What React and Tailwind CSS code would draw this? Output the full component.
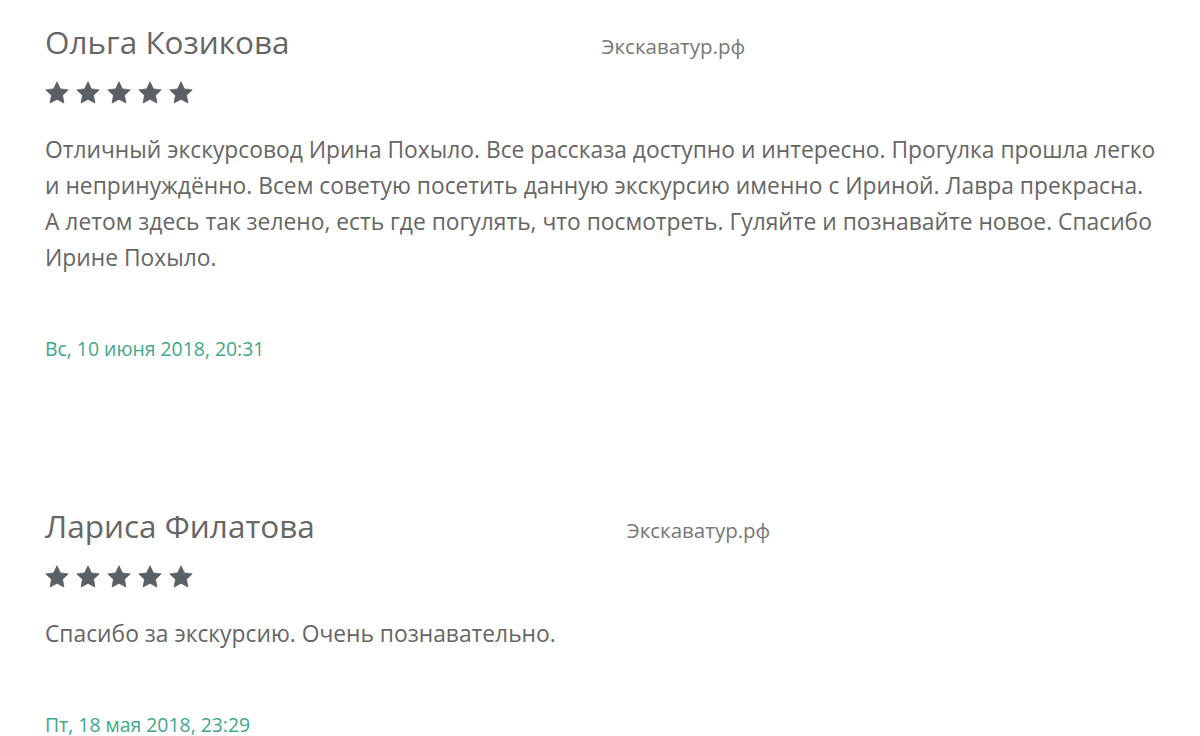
import React from 'react';

const reviews = [
  {
    name: 'Ольга Козикова',
    text: 'Отличный экскурсовод Ирина Похыло. Все рассказа доступно и интересно. Прогулка прошла легко и непринуждённо. Всем советую посетить данную экскурсию именно с Ириной. Лавра прекрасна. А летом здесь так зелено, есть где погулять, что посмотреть. Гуляйте и познавайте новое. Спасибо Ирине Похыло.',
    date: 'Вс, 10 июня 2018, 20:31',
  },
  {
    name: 'Лариса Филатова',
    text: 'Спасибо за экскурсию. Очень познавательно.',
    date: 'Пт, 18 мая 2018, 23:29',
  },
];

const Star = () => (
  <svg width="24" height="23" viewBox="0 0 24 23" className="fill-[#5b5f66]">
    <path
      d="M12 0.8l3.4 7.1 7.8 1-5.7 5.4 1.4 7.7L12 18.3 5.1 22l1.4-7.7L0.8 8.9l7.8-1z"
      strokeLinejoin="round"
      className="stroke-[#5b5f66]"
      strokeWidth="0.8"
    />
  </svg>
);

const Review = ({ name, text, date }) => (
  <div className="flex flex-col">
    <div className="flex items-baseline gap-[312px]">
      <h2 className="text-[31.5px] leading-[40px] text-[#666]">{name}</h2>
      <span className="text-[20.5px] text-[#777]">Экскаватур.рф</span>
    </div>
    <div className="flex gap-[7px] mt-[19px]">
      {[0, 1, 2, 3, 4].map((i) => <Star key={i} />)}
    </div>
    <p className="mt-[28px] text-[22.8px] leading-[36px] text-[#666]">{text}</p>
    <div className="mt-[61px] text-[19.4px] leading-[24px] text-[#3fa88a]">{date}</div>
  </div>
);

export default function App() {
  return (
    <div className="w-[1200px] h-[736px] overflow-hidden bg-white px-[45px] pt-[22px] font-['Open_Sans',sans-serif]">
      <div className="w-[1113px] flex flex-col gap-[145px]">
        {reviews.map((r) => (
          <Review key={r.name} {...r} />
        ))}
      </div>
    </div>
  );
}
